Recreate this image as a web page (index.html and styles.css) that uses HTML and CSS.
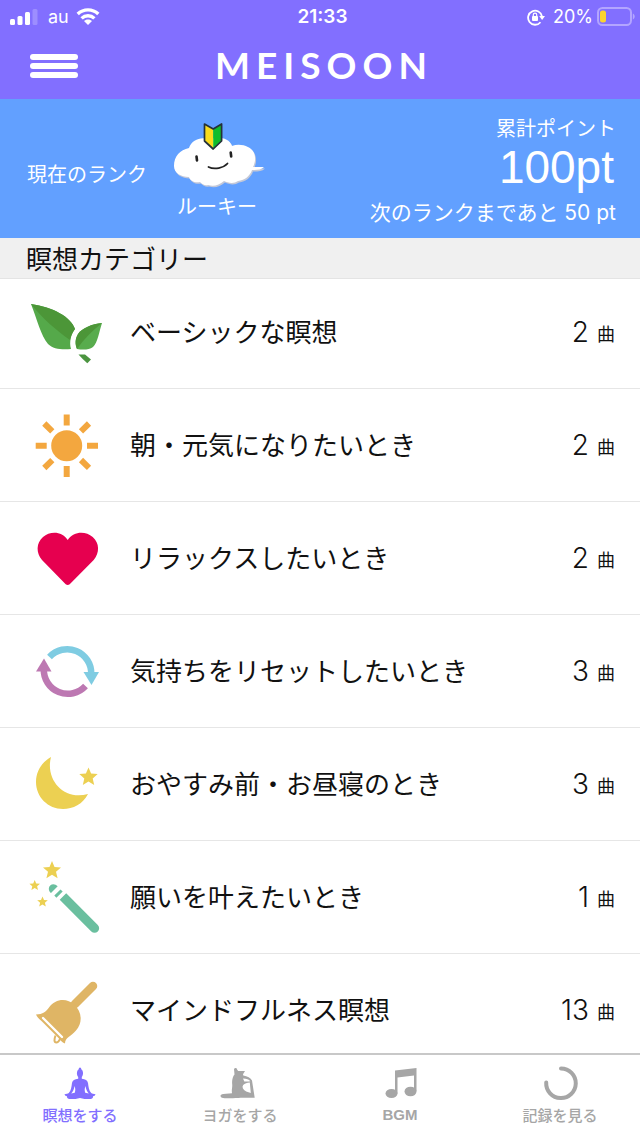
FILE: index.html
```html
<!DOCTYPE html>
<html lang="ja">
<head>
<meta charset="utf-8">
<meta name="viewport" content="width=device-width, initial-scale=1">
<title>MEISOON</title>
<link rel="stylesheet" href="styles.css">
</head>
<body>
<div class="app">
  <header class="header">
    <div class="status">
      <div class="status-side">
        <svg class="signal" viewBox="0 0 28 18" width="28" height="18" fill="#fff">
          <rect x="0" y="11" width="5" height="6" rx="1.5"/><rect x="7.5" y="8" width="5" height="9" rx="1.5"/><rect x="15" y="4" width="5" height="13" rx="1.5"/><rect x="22.500" y="1" width="5" height="16" rx="1.5" opacity=".22"/>
        </svg>
        <span class="carrier">au</span>
        <svg viewBox="0 0 24 18" width="24" height="18" fill="none" stroke="#fff" stroke-width="3.400">
          <path d="M1.700 6a15 15 0 0 1 20.600 0M5.600 10.400a9.200 9.200 0 0 1 12.800 0"/><path d="M12 11.500c-1.600 0-3 .6-4 1.600l4 4 4-4c-1-1-2.400-1.600-4-1.600z" fill="#fff" stroke="none"/>
        </svg>
      </div>
      <time class="clock">21:33</time>
      <div class="status-side status-right">
        <svg class="lock" viewBox="0 0 18 18" width="18" height="18">
          <path d="M13.500 14.200A7 7 0 1 1 15 8.500" fill="none" stroke="#fff" stroke-width="1.800"/><path d="M12.200 8h5.800l-2.900 4z" fill="#fff"/><rect x="5" y="8" width="6" height="5" rx="1" fill="#fff"/><path d="M6.300 8.500V6.800a1.700 1.700 0 0 1 3.400 0v1.700" fill="none" stroke="#fff" stroke-width="1.200"/>
        </svg>
        <span class="percent">20%</span>
        <svg viewBox="0 0 38 19" width="38" height="19">
          <rect x="1" y="1" width="33" height="17" rx="4.500" fill="none" stroke="#b3a5ff" stroke-width="2"/><path d="M35.800 6.500c2.500 1 2.500 5 0 6z" fill="#b3a5ff"/><rect x="3" y="3.500" width="6" height="12" rx="2.500" fill="#fbd32e"/>
        </svg>
      </div>
    </div>
    <div class="nav">
      <button class="menu" type="button" aria-label="メニュー"><span class="bar"></span><span class="bar"></span><span class="bar"></span></button>
      <h1 class="logo">MEISOON</h1>
    </div>
  </header>

  <section class="rank">
    <p class="rank-label">現在のランク</p>
    <div class="rank-badge">
      <svg viewBox="174 122 94 68" width="94" height="68">
        <path d="M190 147c3-9 14-12 20-8 7-4 20-3 23 6 8-3 19 0 22 7 2 5 1 10-1 14l11 0c-3 3-7 3-12 3-2 6-7 10-14 11-4 3-10 2-14 0-5 4-10 6-16 4-3 1-6-1-8-3-5 1-10-1-11-5-8 0-15-4-15-11 0-10 6-16 15-18z" fill="#c3c8d8" transform="translate(1 1.500)"/>
        <path d="M190 147c3-9 14-12 20-8 7-4 20-3 23 6 8-3 19 0 22 7 2 5 1 10-1 14l11 0c-3 3-7 3-12 3-2 6-7 10-14 11-4 3-10 2-14 0-5 4-10 6-16 4-3 1-6-1-8-3-5 1-10-1-11-5-8 0-15-4-15-11 0-10 6-16 15-18z" fill="#fff"/>
        <path d="M205.500 123l8.700 5v20l-8.700-8z" fill="#f9dc1e"/><path d="M214.200 128l8.400-5v17l-8.400 8z" fill="#0fbd2b"/>
        <path d="M205.500 123l8.700 5 8.400-5v17l-8.400 8-8.700-8z" fill="none" stroke="#25323a" stroke-width="1.700" stroke-linejoin="round"/>
        <path d="M197.500 155.500l.5 4M231.700 151.500l.5 4" stroke="#222" stroke-width="2.600" stroke-linecap="round"/>
        <path d="M209.500 166c6 3 15 1 19-3.500" fill="none" stroke="#222" stroke-width="1.800" stroke-linecap="round"/>
      </svg>
      <p class="rank-name">ルーキー</p>
    </div>
    <div class="points">
      <p class="points-label">累計ポイント</p>
      <p class="points-total">100pt</p>
      <p class="points-next">次のランクまであと 50 pt</p>
    </div>
  </section>

  <h2 class="heading">瞑想カテゴリー</h2>
  <main class="list">
    <a class="row" href="#basic">
      <svg class="icon" viewBox="28 292 76 80">
        <path d="M31 304c22 3 40 13 44 25-4 5-6 13-4 20-9 1-18 0-23-5-7-8-11-25-17-40z" fill="#55a94a"/><path d="M31 304c22 3 40 13 44 25-2 3-4 6-5 11-13-9-28-22-39-36z" fill="#4c9638"/>
        <path d="M102 323c-10 1-20 5-24 11-3 5-3 10-1 15 6 1 12 1 16-2 5-5 6-15 9-24z" fill="#58ac4d"/><path d="M102 323c-10 1-20 5-24 11-3 5-3 10-1 15 7-10 15-18 25-26z" fill="#4c9638"/>
        <path d="M78.500 354.500h6.500l6 5-3.700 3.700-4.600-4.200z" fill="#4b9440"/>
      </svg>
      <span class="title">ベーシックな瞑想</span><span class="count">2</span><span class="unit">曲</span>
    </a>
    <a class="row" href="#morning">
      <svg class="icon" viewBox="28 405 76 80">
        <circle cx="66.700" cy="445.800" r="15.500" fill="#f3a73f"/>
        <path d="M66.700 414.500v11M66.700 466v11M35.700 445.800h11M87 445.800h11M44.300 423.500l8 7.800M81 460l8 7.800M44.300 468l8-7.800M81 431.300l8-7.800" stroke="#f3a73f" stroke-width="6"/>
      </svg>
      <span class="title">朝・元気になりたいとき</span><span class="count">2</span><span class="unit">曲</span>
    </a>
    <a class="row" href="#relax">
      <svg class="icon" viewBox="28 518 76 80">
        <path d="M67.700 540c6-9 18-9 25-3 7 6 7 16 1 23l-24 24.200q-2 1.600-4 0L42 560c-6-7-6-17 1-23 7-6 19-6 24.700 3z" fill="#e6004f"/>
      </svg>
      <span class="title">リラックスしたいとき</span><span class="count">2</span><span class="unit">曲</span>
    </a>
    <a class="row" href="#reset">
      <svg class="icon" viewBox="28 631 76 80">
        <g fill="none" stroke-width="6.500"><path d="M49.500 657a24 24 0 0 1 41.700 17" stroke="#7fcce2"/><path d="M85.500 686a24 24 0 0 1-41.700-17" stroke="#bd78b2"/></g>
        <path d="M83.500 672h15.500l-7.500 13z" fill="#7fcce2"/><path d="M36 671.500h15.500L44 658.500z" fill="#bd78b2"/>
      </svg>
      <span class="title">気持ちをリセットしたいとき</span><span class="count">3</span><span class="unit">曲</span>
    </a>
    <a class="row" href="#night">
      <svg class="icon" viewBox="28 744 76 80">
        <path d="M51 757c-6 23 13 44 37 37-5 10-15 15-25 15-15 0-27-12-27-27 0-11 6-20 15-25z" fill="#ecd052"/>
        <path d="M88.500 767.500l2.600 6 6.600.6-5 4.400 1.500 6.400-5.700-3.400-5.700 3.400 1.500-6.400-5-4.400 6.600-.6z" fill="#ecd052"/>
      </svg>
      <span class="title">おやすみ前・お昼寝のとき</span><span class="count">3</span><span class="unit">曲</span>
    </a>
    <a class="row" href="#wish">
      <svg class="icon" viewBox="28 857 76 80">
        <g fill="#ecd052"><path d="M52 861l2.500 6 6.500.5-5 4.300 1.600 6.400-5.600-3.500-5.600 3.500 1.600-6.400-5-4.300 6.500-.5z"/><path d="M34.700 880l1.500 3.500 3.800.3-2.900 2.500.9 3.700-3.300-2-3.300 2 .9-3.700-2.900-2.500 3.800-.3z"/><path d="M42.500 896.500l1.500 3.500 3.800.3-2.900 2.500.9 3.700-3.300-2-3.300 2 .9-3.700-2.900-2.500 3.800-.3z"/></g>
        <path d="M51 893c-2.600-2.200-2.800-5.500-.8-7.500s5.200-1.700 7.500.8zM54.300 895.600l6.200-6.200 2.200 2-6.300 6.300zM59.700 899.800l6.500-6.500L97.800 925a4.500 4.500 0 0 1-6.500 6.500z" fill="#6abf9f"/>
      </svg>
      <span class="title">願いを叶えたいとき</span><span class="count">1</span><span class="unit">曲</span>
    </a>
    <a class="row" href="#mindfulness">
      <svg class="icon" viewBox="28 970 76 80">
        <path d="M75 1004l18-18" stroke="#dfb565" stroke-width="8.500" stroke-linecap="round"/>
        <path d="M36 1014.500c7 0 10-3 13-7 6-9 18-10 25-3 8 7 9 18 2 26-5 6-11 7-11 13-3-1-5-4-7-6l-16-16c-2-2-5-4-6-7z" fill="#dfb565"/>
        <path d="M43 1018L62 1037" stroke="#fff" stroke-width="2.400" stroke-linecap="round"/>
        <path d="M55.500 1035.500c-1.500 4-1.500 7 .8 7s3-2 4-4" fill="none" stroke="#dfb565" stroke-width="2"/>
      </svg>
      <span class="title">マインドフルネス瞑想</span><span class="count">13</span><span class="unit">曲</span>
    </a>
  </main>

  <nav class="tabs">
    <a class="tab tab-active" href="#meditate" aria-current="page">
      <svg class="tab-icon" viewBox="60 1065 40 40" fill="currentColor">
        <path d="M80 1067.500c.8 0 1.300.8 1.200 1.700 2 .8 2.600 5.200.6 7.800v1.700c3.600.6 5.700 1.500 6.200 4.300.6 4 .8 7.500 3.200 10 1 .8 2.400 1 4.300 1.200-.3 1.300-1.300 1.800-2.400 2 .2 2-1.400 2.900-4.100 2.900-3 0-6-.2-9-1.100-3 .9-6 1.100-9 1.100-2.700 0-4.300-.9-4.100-2.900-1.100-.2-2.100-.7-2.400-2 1.900-.2 3.300-.4 4.300-1.200 2.400-2.500 2.600-6 3.200-10 .5-2.800 2.600-3.700 6.200-4.300v-1.700c-2-2.600-1.400-7 .6-7.800-.1-.9.4-1.700 1.200-1.700z"/>
        <path d="M74.600 1086c-.6 3-1.600 5.500-3.400 7.500l3.600-.8c.8-2.200.6-4.500-.2-6.700zM85.400 1086c.6 3 1.600 5.500 3.400 7.500l-3.600-.8c-.8-2.200-.6-4.500.2-6.700z" fill="#fff"/>
      </svg>
      <span>瞑想をする</span>
    </a>
    <a class="tab" href="#yoga">
      <svg class="tab-icon" viewBox="220 1065 40 40" fill="currentColor">
        <path d="M234 1069c1-1.500 3-1 3.200.7l1 1.300h6.800l-2 3.300.3 1.200c4 .6 7.500 2.300 8.700 5l2.700 17.200h-14c-5 .5-13 .7-17.500.2-3.800-.5-3.400-3.500 0-3.900l8.800-.8c-.6-4 .5-5.500.2-9-.5-4 .7-8 2.300-9.700z"/><path d="M243 1078.500c3.500 0 6 1 7.300 2.700-2 .4-4.300.2-6 .2zM249.800 1082.500l1 10.500-4.600-1.500c-3.500-2-4.500-4.500-3-6.500 1.500-1.800 4-2.200 6.600-2.500z" fill="#fff"/>
      </svg>
      <span>ヨガをする</span>
    </a>
    <a class="tab" href="#bgm">
      <svg class="tab-icon" viewBox="380 1065 40 40" fill="currentColor">
        <path d="M395 1070.500l21.500-2.500v23H414v-15.500l-16.500 2v16H395z"/><ellipse cx="391.500" cy="1093.500" rx="6" ry="4.600"/><ellipse cx="410.500" cy="1091.500" rx="6" ry="4.800"/>
      </svg>
      <span class="tab-latin">BGM</span>
    </a>
    <a class="tab" href="#history">
      <svg class="tab-icon" viewBox="540 1065 40 40">
        <path d="M561 1068.500a14.800 14.800 0 1 1-14.800 14" fill="none" stroke="currentColor" stroke-width="4" stroke-linecap="round"/>
      </svg>
      <span>記録を見る</span>
    </a>
  </nav>
</div>
</body>
</html>
```
FILE: styles.css
```css
* { box-sizing: border-box; }
body { margin: 0; background: #fff; color: #111; font-family: "Noto Sans CJK JP", sans-serif; }
p, h1, h2 { margin: 0; font-weight: 400; }
a { color: inherit; text-decoration: none; }
svg { display: block; flex: none; }
.app { display: flex; flex-direction: column; height: 100vh; }

.header { flex: none; background: #826fff; color: #fff; }
.status { display: grid; grid-template-columns: 1fr auto 1fr; align-items: center; height: 33px; padding: 0 5px 0 10px; font-family: Inter, sans-serif; font-size: 18px; }
.status-side { display: flex; align-items: center; }
.status-right { justify-content: flex-end; }
.carrier { margin: 0 7px 0 10px; }
.clock { font-size: 19px; font-weight: 600; }
.percent { margin: 0 4px 0 8px; }
.nav { display: grid; grid-template-columns: 1fr auto 1fr; align-items: center; height: 66px; padding: 0 30px; }
.menu { display: flex; flex-direction: column; gap: 3px; width: 48px; padding: 0; border: 0; background: none; }
.bar { width: 100%; height: 6px; border-radius: 3px; background: #fff; }
.logo { padding: 0 0 2px 8px; font-family: Lato, sans-serif; font-size: 37px; font-weight: 700; line-height: 48px; letter-spacing: 6px; }

.rank { flex: none; display: flex; align-items: center; padding: 17px 24px 11px 27px; background: #62a0ff; color: #fff; font-size: 20px; }
.rank-label { padding-top: 4px; line-height: 28px; }
.rank-badge { display: flex; flex-direction: column; align-items: center; margin-left: 26px; }
.rank-name { line-height: 30px; padding-right: 6px; }
.points { margin-left: auto; text-align: right; }
.points-label { line-height: 24px; }
.points-total { padding-right: 2px; font-family: "Liberation Sans", sans-serif; font-size: 46px; line-height: 54px; }
.points-next { padding-top: 5px; font-family: Inter, "Noto Sans CJK JP", sans-serif; font-size: 21px; line-height: 28px; }

.heading { flex: none; padding: 0 26px; border-bottom: 1px solid #e4e4e4; background: #f0f0f0; font-size: 26px; line-height: 40px; }
.list { flex: 1; min-height: 0; overflow-y: auto; scrollbar-width: none; }
.row { display: flex; align-items: center; height: 113px; padding: 0 25px 0 28px; border-bottom: 1px solid #e6e6e6; }
.row:first-child { height: 110px; padding-bottom: 3px; }
.icon { width: 76px; height: 80px; }
.title { flex: 1; margin-left: 26px; padding-bottom: 2px; font-size: 26px; line-height: 40px; }
.count { font-family: Inter, sans-serif; font-size: 28px; font-weight: 300; line-height: 40px; }
.unit { margin-left: 8px; padding-top: 2px; font-size: 18px; line-height: 28px; }

.tabs { flex: none; display: grid; grid-template-columns: repeat(4, 1fr); height: 84px; padding-top: 10px; border-top: 2px solid #c8c8c8; background: #fff; }
.tab { display: flex; flex-direction: column; align-items: center; color: #a6a6a6; font-size: 15px; font-weight: 500; line-height: 20px; }
.tab-active { color: #826fff; }
.tab-icon { width: 40px; height: 40px; }
.tab-latin { font-family: "Liberation Sans", sans-serif; font-weight: 700; }
```
